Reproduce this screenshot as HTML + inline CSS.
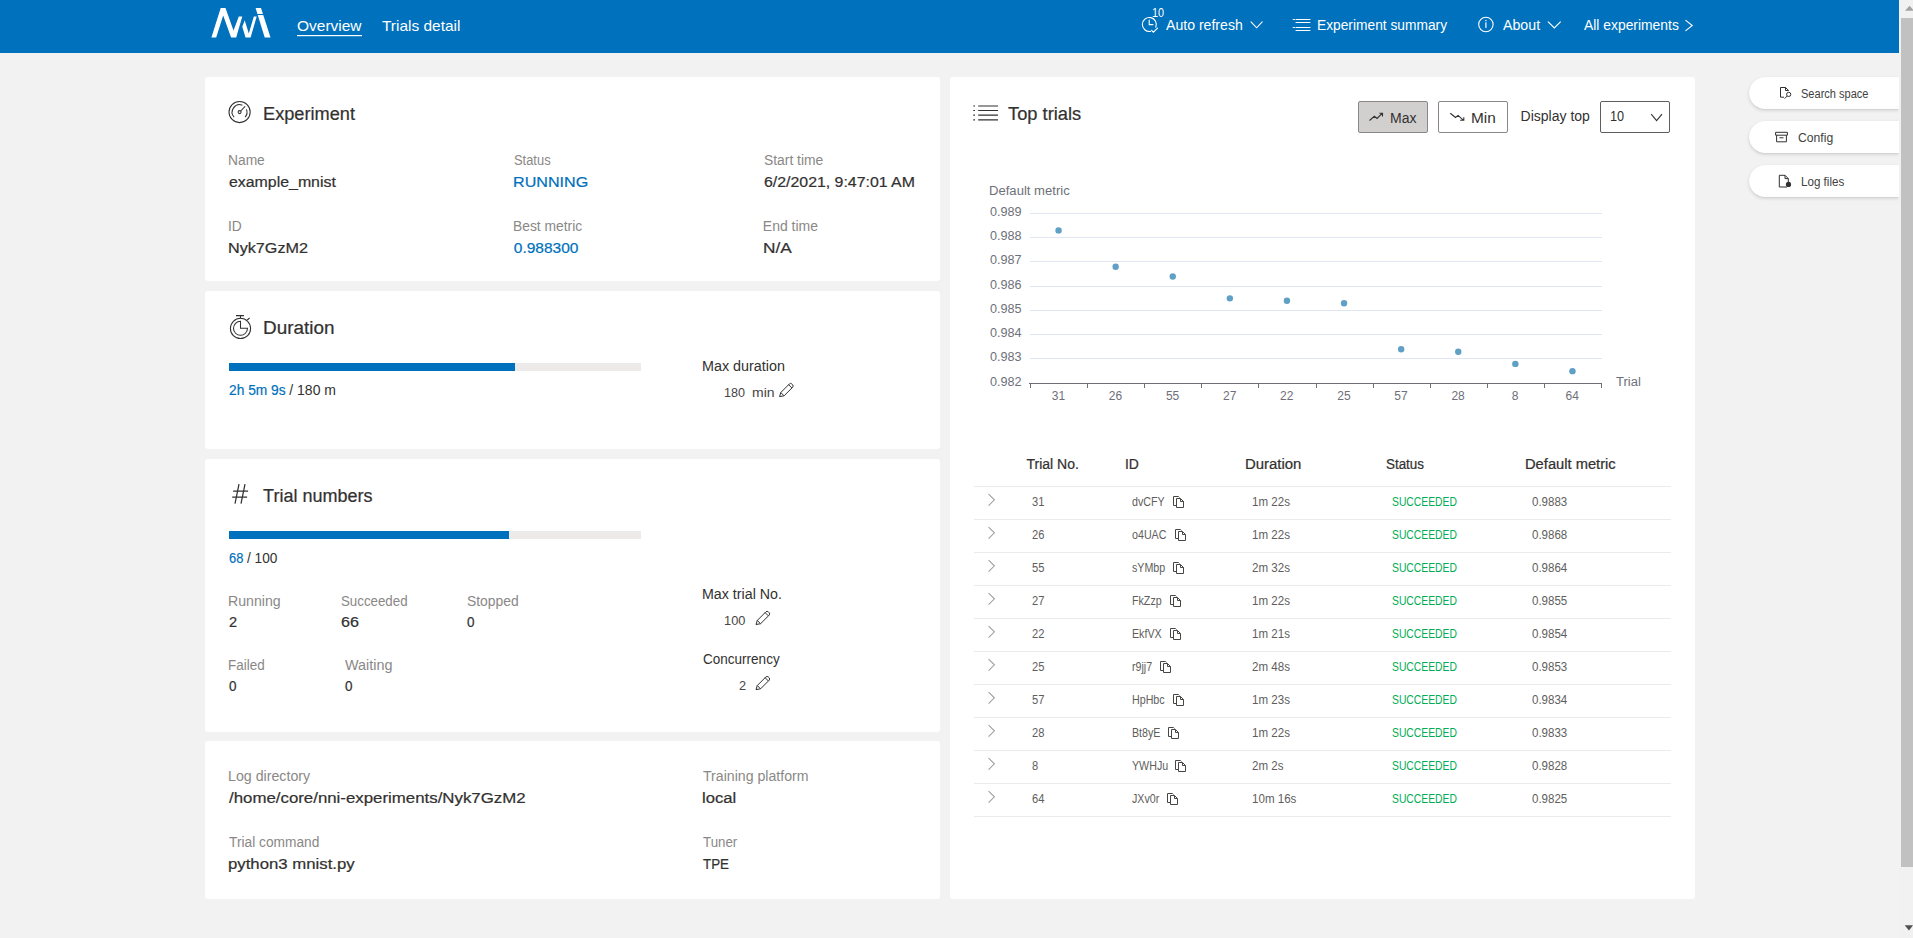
<!DOCTYPE html>
<html><head><meta charset="utf-8">
<style>
html,body{margin:0;padding:0;width:1913px;height:938px;overflow:hidden;background:#f2f2f2;font-family:"Liberation Sans",sans-serif;}
.t{position:absolute;white-space:nowrap;font-family:"Liberation Sans",sans-serif;}
.abs{position:absolute;}
.card{position:absolute;background:#fff;border-radius:3px;}
.sidebtn{position:absolute;left:1749px;width:150px;height:32px;background:#fff;border-radius:16px 0 0 16px;box-shadow:0 1.6px 3.6px rgba(0,0,0,0.13),0 0.3px 0.9px rgba(0,0,0,0.11);}
svg{position:absolute;left:0;top:0;overflow:visible;}
</style></head>
<body>
<div class="abs" style="left:0;top:0;width:1899px;height:53px;background:#0071bc;"></div>
<div class="card" style="left:205px;top:77px;width:735px;height:204px;"></div>
<div class="card" style="left:205px;top:291px;width:735px;height:158px;"></div>
<div class="card" style="left:205px;top:459px;width:735px;height:273px;"></div>
<div class="card" style="left:205px;top:741px;width:735px;height:158px;"></div>
<div class="card" style="left:950px;top:77px;width:745px;height:822px;"></div>
<div class="sidebtn" style="top:77px;"></div>
<div class="sidebtn" style="top:121px;"></div>
<div class="sidebtn" style="top:165px;"></div>
<!-- progress bars -->
<div class="abs" style="left:229px;top:363px;width:412px;height:8px;background:#edebe9;"></div>
<div class="abs" style="left:229px;top:363px;width:286px;height:8px;background:#0071bc;"></div>
<div class="abs" style="left:229px;top:531px;width:412px;height:8px;background:#edebe9;"></div>
<div class="abs" style="left:229px;top:531px;width:280px;height:8px;background:#0071bc;"></div>
<!-- buttons -->
<div class="abs" style="left:1358px;top:101px;width:68px;height:30px;background:#d2d0ce;border:1px solid #8a8886;border-radius:2px;"></div>
<div class="abs" style="left:1438px;top:101px;width:68px;height:30px;background:#fff;border:1px solid #8a8886;border-radius:2px;"></div>
<div class="abs" style="left:1600px;top:101px;width:68px;height:30px;background:#fff;border:1px solid #605e5c;border-radius:2px;"></div>
<!-- scrollbar -->
<div class="abs" style="left:1899px;top:0;width:14px;height:938px;background:#f1f1f1;"></div>
<div class="abs" style="left:1901px;top:18px;width:12px;height:849px;background:#c1c1c1;"></div>
<svg width="1913" height="938" viewBox="0 0 1913 938">
 <g fill="#a3a3a3"><path d="M1905,10.7 L1909.5,5.7 L1914,10.7 Z"/></g>
 <g fill="#505050"><path d="M1904.7,925.2 L1913,925.2 L1909,930.4 Z"/></g>
 <!-- logo -->
 <g fill="#fff" transform="translate(205,0)">
  <path d="M6.4,37.6 L15.7,8 L20.5,8 L28.5,30.6 L33.8,16.5 L37.3,16.5 L31.2,37.6 L26.1,37.6 L18.2,15.5 L11.2,37.6 Z"/>
  <path d="M37.3,26.7 L39.7,20.3 L43.8,33.6 L48.8,16.5 L51.7,16.5 L45.6,37.6 L40.5,37.6 Z"/>
  <path d="M50.6,8 L56,8 L65.5,37.6 L59.7,37.6 Z"/>
 </g>
 <path d="M51,14.5 L60,14.5" stroke="#0071bc" stroke-width="1.1" transform="translate(205,0)"/>
 <rect x="297" y="35" width="65" height="1.2" fill="#fff"/>
 <!-- header icons -->
 <g fill="none" stroke="#fff" stroke-width="1.1" stroke-linecap="round">
  <path d="M1155.8,27.2 A7,7 0 1 0 1150.5,31.4"/>
  <path d="M1149.2,20 V24.6 H1153"/>
  <path d="M1151.6,30.3 L1153.4,32.2 L1157.6,28.1"/>
  <path d="M1251,21.8 L1256.6,27.8 L1262.2,21.8"/>
  <path d="M1296,19.5 H1310 M1296,22.5 H1310 M1296,27.5 H1310 M1296,30.5 H1310"/>
  <path d="M1293.2,19.5 H1294.6 M1293.2,27.5 H1294.6"/>
  <circle cx="1485.9" cy="24.5" r="7.2"/>
  <path d="M1548.2,21.8 L1554.3,28 L1560.4,21.8"/>
  <path d="M1685.8,20.4 L1692.2,25.5 L1685.8,30.6"/>
 </g>
 <rect x="1485.3" y="22.3" width="1.2" height="5.6" fill="#fff"/>
 <rect x="1485.3" y="19.9" width="1.2" height="1.3" fill="#fff"/>
 <!-- card icons -->
 <g fill="none" stroke="#323130" stroke-width="1.05">
  <circle cx="239.6" cy="112" r="10.6"/>
  <path d="M234.10,117.05 A7.4,7.4 0 0 1 242.37,105.24"/>
  <path d="M246.46,109.33 A7.4,7.4 0 0 1 245.10,117.05"/>
  <circle cx="239.6" cy="112.1" r="1.5"/>
  <path d="M240.7,111 L245.1,106.3"/>
  <circle cx="240.5" cy="328.4" r="10.1"/>
  <path d="M240.5,321.3 A7,7 0 1 0 247.5,328.3 H240.5 Z"/>
  <path d="M236,315.6 H244 M240.5,315.6 V318.3 M247.2,320 L249.6,318"/>
 </g>
 <g fill="none" stroke="#323130" stroke-width="1.25">
  <path d="M239,484.2 L235,503.6 M245,484.2 L241,503.6 M233.1,491 H248.1 M232.2,497 H247.1"/>
 </g>
 <!-- pencils -->
 <g fill="none" stroke="#323130" stroke-width="1">
  <path d="M779.5,396.6 L780.8,392.5 L789.3,384 Q790.6,382.8 791.9,384 L792.6,384.7 Q793.8,386 792.6,387.3 L784.1,395.8 Z M780.8,392.5 L783.9,395.7 M788.6,384.7 L791.9,388"/>
  <path d="M756,624.5 L757.3,620.4 L765.8,611.9 Q767.1,610.7 768.4,611.9 L769.1,612.6 Q770.3,613.9 769.1,615.2 L760.6,623.7 Z M757.3,620.4 L760.4,623.6 M765.1,612.6 L768.4,615.9"/>
  <path d="M756,689.6 L757.3,685.5 L765.8,677 Q767.1,675.8 768.4,677 L769.1,677.7 Q770.3,679 769.1,680.3 L760.6,688.8 Z M757.3,685.5 L760.4,688.7 M765.1,677.7 L768.4,681"/>
 </g>
 <!-- top trials icons -->
 <g fill="none" stroke="#323130" stroke-width="1.1">
  <path d="M978.2,106 H998 M978.2,110.5 H998 M978.2,115.1 H998 M978.2,119.9 H998"/>
  <path d="M973.3,106 H975 M973.3,110.5 H975 M973.3,115.1 H975 M973.3,119.9 H975"/>
  <path d="M1369.5,120.5 L1374.4,116.3 L1377,118.4 L1382.2,113.3 M1379.4,113.3 H1382.5 V116.6"/>
  <path d="M1450.3,113.3 L1455.5,117.5 L1458.1,115.4 L1463.5,120.3 M1463.8,117.3 V120.3 H1460.2"/>
  <path d="M1651.2,114.2 L1656.6,120.6 L1662,114.2"/>
 </g>
 <!-- chart -->
 <rect x="1030" y="213" width="572" height="1" fill="#e0e6f1"/><rect x="1030" y="237" width="572" height="1" fill="#e0e6f1"/><rect x="1030" y="261" width="572" height="1" fill="#e0e6f1"/><rect x="1030" y="286" width="572" height="1" fill="#e0e6f1"/><rect x="1030" y="310" width="572" height="1" fill="#e0e6f1"/><rect x="1030" y="334" width="572" height="1" fill="#e0e6f1"/><rect x="1030" y="358" width="572" height="1" fill="#e0e6f1"/><rect x="1029" y="383" width="573" height="1" fill="#6e7079"/><rect x="1030" y="383" width="1" height="5" fill="#6e7079"/><rect x="1087" y="383" width="1" height="5" fill="#6e7079"/><rect x="1144" y="383" width="1" height="5" fill="#6e7079"/><rect x="1201" y="383" width="1" height="5" fill="#6e7079"/><rect x="1258" y="383" width="1" height="5" fill="#6e7079"/><rect x="1316" y="383" width="1" height="5" fill="#6e7079"/><rect x="1373" y="383" width="1" height="5" fill="#6e7079"/><rect x="1430" y="383" width="1" height="5" fill="#6e7079"/><rect x="1487" y="383" width="1" height="5" fill="#6e7079"/><rect x="1544" y="383" width="1" height="5" fill="#6e7079"/><rect x="1601" y="383" width="1" height="5" fill="#6e7079"/><circle cx="1058.55" cy="230.39" r="3.2" fill="#5fa0c4"/><circle cx="1115.65" cy="266.8" r="3.2" fill="#5fa0c4"/><circle cx="1172.75" cy="276.51" r="3.2" fill="#5fa0c4"/><circle cx="1229.85" cy="298.35" r="3.2" fill="#5fa0c4"/><circle cx="1286.95" cy="300.78" r="3.2" fill="#5fa0c4"/><circle cx="1344.05" cy="303.21" r="3.2" fill="#5fa0c4"/><circle cx="1401.15" cy="349.32" r="3.2" fill="#5fa0c4"/><circle cx="1458.25" cy="351.75" r="3.2" fill="#5fa0c4"/><circle cx="1515.35" cy="363.88" r="3.2" fill="#5fa0c4"/><circle cx="1572.45" cy="371.16" r="3.2" fill="#5fa0c4"/>
 <!-- table -->
 <rect x="974" y="486" width="697" height="1" fill="#edebe9"/><rect x="974" y="519" width="697" height="1" fill="#edebe9"/><rect x="974" y="552" width="697" height="1" fill="#edebe9"/><rect x="974" y="585" width="697" height="1" fill="#edebe9"/><rect x="974" y="618" width="697" height="1" fill="#edebe9"/><rect x="974" y="651" width="697" height="1" fill="#edebe9"/><rect x="974" y="684" width="697" height="1" fill="#edebe9"/><rect x="974" y="717" width="697" height="1" fill="#edebe9"/><rect x="974" y="750" width="697" height="1" fill="#edebe9"/><rect x="974" y="783" width="697" height="1" fill="#edebe9"/><rect x="974" y="816" width="697" height="1" fill="#edebe9"/>
 <g fill="none" stroke="#a19f9d" stroke-width="1.1"><path d="M988.6,494.1 L994.4,499.85 L988.6,505.6" /><path d="M988.6,527.1 L994.4,532.85 L988.6,538.6" /><path d="M988.6,560.1 L994.4,565.85 L988.6,571.6" /><path d="M988.6,593.1 L994.4,598.85 L988.6,604.6" /><path d="M988.6,626.1 L994.4,631.85 L988.6,637.6" /><path d="M988.6,659.1 L994.4,664.85 L988.6,670.6" /><path d="M988.6,692.1 L994.4,697.85 L988.6,703.6" /><path d="M988.6,725.1 L994.4,730.85 L988.6,736.6" /><path d="M988.6,758.1 L994.4,763.85 L988.6,769.6" /><path d="M988.6,791.1 L994.4,796.85 L988.6,802.6" /></g>
 <g fill="none" stroke="#484644" stroke-width="1"><g transform="translate(1173,496)"><path d="M0.5,9.5 H3 M0.5,9.5 V0.5 H5.5 L6.5,1.5" /><path d="M3.5,11.5 V2.5 H7.5 L10.5,5.5 V11.5 Z M7.5,2.5 V5.5 H10.5" /></g><g transform="translate(1175,529)"><path d="M0.5,9.5 H3 M0.5,9.5 V0.5 H5.5 L6.5,1.5" /><path d="M3.5,11.5 V2.5 H7.5 L10.5,5.5 V11.5 Z M7.5,2.5 V5.5 H10.5" /></g><g transform="translate(1173,562)"><path d="M0.5,9.5 H3 M0.5,9.5 V0.5 H5.5 L6.5,1.5" /><path d="M3.5,11.5 V2.5 H7.5 L10.5,5.5 V11.5 Z M7.5,2.5 V5.5 H10.5" /></g><g transform="translate(1170,595)"><path d="M0.5,9.5 H3 M0.5,9.5 V0.5 H5.5 L6.5,1.5" /><path d="M3.5,11.5 V2.5 H7.5 L10.5,5.5 V11.5 Z M7.5,2.5 V5.5 H10.5" /></g><g transform="translate(1170,628)"><path d="M0.5,9.5 H3 M0.5,9.5 V0.5 H5.5 L6.5,1.5" /><path d="M3.5,11.5 V2.5 H7.5 L10.5,5.5 V11.5 Z M7.5,2.5 V5.5 H10.5" /></g><g transform="translate(1160,661)"><path d="M0.5,9.5 H3 M0.5,9.5 V0.5 H5.5 L6.5,1.5" /><path d="M3.5,11.5 V2.5 H7.5 L10.5,5.5 V11.5 Z M7.5,2.5 V5.5 H10.5" /></g><g transform="translate(1173,694)"><path d="M0.5,9.5 H3 M0.5,9.5 V0.5 H5.5 L6.5,1.5" /><path d="M3.5,11.5 V2.5 H7.5 L10.5,5.5 V11.5 Z M7.5,2.5 V5.5 H10.5" /></g><g transform="translate(1168,727)"><path d="M0.5,9.5 H3 M0.5,9.5 V0.5 H5.5 L6.5,1.5" /><path d="M3.5,11.5 V2.5 H7.5 L10.5,5.5 V11.5 Z M7.5,2.5 V5.5 H10.5" /></g><g transform="translate(1175,760)"><path d="M0.5,9.5 H3 M0.5,9.5 V0.5 H5.5 L6.5,1.5" /><path d="M3.5,11.5 V2.5 H7.5 L10.5,5.5 V11.5 Z M7.5,2.5 V5.5 H10.5" /></g><g transform="translate(1167,793)"><path d="M0.5,9.5 H3 M0.5,9.5 V0.5 H5.5 L6.5,1.5" /><path d="M3.5,11.5 V2.5 H7.5 L10.5,5.5 V11.5 Z M7.5,2.5 V5.5 H10.5" /></g></g>
 <!-- side icons -->
 <g fill="none" stroke="#323130" stroke-width="1">
  <path d="M1784,97.2 H1780.5 V87.5 H1785.5 L1788.6,90.5 M1785.5,87.5 V90.5 H1788.6"/>
  <circle cx="1788.7" cy="94.4" r="2.1"/>
  <path d="M1787.2,96 L1784.6,98.6"/>
  <path d="M1775.6,132.3 H1787.4 V135.2 H1775.6 Z M1776.6,135.2 V141.8 H1786.4 V135.2 M1779.5,137.8 H1783.5"/>
  <path d="M1787,187 H1779.3 V175.3 H1785 L1788.3,178.6 V182 M1785,175.3 V178.6 H1788.3"/>
 </g>
 <circle cx="1788.5" cy="184.4" r="2.6" fill="#323130"/>
</svg>
<div class="t" style="left:297.3px;top:18px;font-size:15px;line-height:15px;color:#ffffff;transform:scaleX(1.032);transform-origin:0 0;">Overview</div>
<div class="t" style="left:382.2px;top:18px;font-size:15px;line-height:15px;color:#ffffff;transform:scaleX(1.030);transform-origin:0 0;">Trials detail</div>
<div class="t" style="left:1151.5px;top:7px;font-size:12px;line-height:12px;color:#ffffff;transform:scaleX(0.900);transform-origin:0 0;">10</div>
<div class="t" style="left:1166px;top:18px;font-size:14px;line-height:14px;color:#ffffff;transform:scaleX(1.007);transform-origin:0 0;">Auto refresh</div>
<div class="t" style="left:1317.02px;top:18px;font-size:14px;line-height:14px;color:#ffffff;transform:scaleX(0.983);transform-origin:0 0;">Experiment summary</div>
<div class="t" style="left:1502.5px;top:18px;font-size:14px;line-height:14px;color:#ffffff;transform:scaleX(1.014);transform-origin:0 0;">About</div>
<div class="t" style="left:1583.5px;top:18px;font-size:14px;line-height:14px;color:#ffffff;transform:scaleX(0.991);transform-origin:0 0;">All experiments</div>
<div class="t" style="left:262.99px;top:105px;font-size:18px;line-height:18px;color:#323130;-webkit-text-stroke:0.22px #323130;transform:scaleX(1.011);transform-origin:0 0;">Experiment</div>
<div class="t" style="left:228.12px;top:153px;font-size:14px;line-height:14px;color:#8a8886;transform:scaleX(0.985);transform-origin:0 0;">Name</div>
<div class="t" style="left:229.1px;top:173.75px;font-size:15.5px;line-height:15.5px;color:#323130;-webkit-text-stroke:0.22px #323130;transform:scaleX(1.025);transform-origin:0 0;">example_mnist</div>
<div class="t" style="left:513.8px;top:153px;font-size:14px;line-height:14px;color:#8a8886;transform:scaleX(0.922);transform-origin:0 0;">Status</div>
<div class="t" style="left:512.76px;top:173.75px;font-size:15.5px;line-height:15.5px;color:#0071bc;-webkit-text-stroke:0.22px #0071bc;transform:scaleX(1.039);transform-origin:0 0;">RUNNING</div>
<div class="t" style="left:763.8px;top:153px;font-size:14px;line-height:14px;color:#8a8886;transform:scaleX(0.990);transform-origin:0 0;">Start time</div>
<div class="t" style="left:763.8px;top:173.75px;font-size:15.5px;line-height:15.5px;color:#323130;-webkit-text-stroke:0.22px #323130;transform:scaleX(1.024);transform-origin:0 0;">6/2/2021, 9:47:01 AM</div>
<div class="t" style="left:228.11px;top:219px;font-size:14px;line-height:14px;color:#8a8886;transform:scaleX(0.985);transform-origin:0 0;">ID</div>
<div class="t" style="left:228.06px;top:239.75px;font-size:15.5px;line-height:15.5px;color:#323130;-webkit-text-stroke:0.22px #323130;transform:scaleX(1.044);transform-origin:0 0;">Nyk7GzM2</div>
<div class="t" style="left:512.81px;top:219px;font-size:14px;line-height:14px;color:#8a8886;transform:scaleX(0.988);transform-origin:0 0;">Best metric</div>
<div class="t" style="left:513.8px;top:239.75px;font-size:15.5px;line-height:15.5px;color:#0071bc;-webkit-text-stroke:0.22px #0071bc;">0.988300</div>
<div class="t" style="left:762.8px;top:219px;font-size:14px;line-height:14px;color:#8a8886;">End time</div>
<div class="t" style="left:762.69px;top:239.75px;font-size:15.5px;line-height:15.5px;color:#323130;-webkit-text-stroke:0.22px #323130;transform:scaleX(1.114);transform-origin:0 0;">N/A</div>
<div class="t" style="left:262.85px;top:319px;font-size:18px;line-height:18px;color:#323130;-webkit-text-stroke:0.22px #323130;transform:scaleX(1.051);transform-origin:0 0;">Duration</div>
<div class="t" style="left:702.18px;top:359px;font-size:14px;line-height:14px;color:#323130;transform:scaleX(1.025);transform-origin:0 0;">Max duration</div>
<div class="t" style="left:229px;top:383px;font-size:14px;line-height:14px;color:#0071bc;-webkit-text-stroke:0.2px #0071bc;transform:scaleX(0.983);transform-origin:0 0;">2h 5m 9s</div>
<div class="t" style="left:289.3px;top:383px;font-size:14px;line-height:14px;color:#323130;">/ 180 m</div>
<div class="t" style="left:724.46px;top:385.8px;font-size:13.4px;line-height:13.4px;color:#484644;transform:scaleX(0.938);transform-origin:0 0;">180</div>
<div class="t" style="left:752.2px;top:385.8px;font-size:13.4px;line-height:13.4px;color:#484644;transform:scaleX(1.046);transform-origin:0 0;">min</div>
<div class="t" style="left:263.1px;top:487px;font-size:18px;line-height:18px;color:#323130;-webkit-text-stroke:0.22px #323130;">Trial numbers</div>
<div class="t" style="left:229px;top:551px;font-size:14px;line-height:14px;color:#0071bc;-webkit-text-stroke:0.2px #0071bc;transform:scaleX(0.919);transform-origin:0 0;">68</div>
<div class="t" style="left:247.4px;top:551px;font-size:14px;line-height:14px;color:#323130;transform:scaleX(0.976);transform-origin:0 0;">/ 100</div>
<div class="t" style="left:228.09px;top:594px;font-size:14px;line-height:14px;color:#8a8886;transform:scaleX(1.009);transform-origin:0 0;">Running</div>
<div class="t" style="left:229.1px;top:613.75px;font-size:15.5px;line-height:15.5px;color:#323130;-webkit-text-stroke:0.22px #323130;transform:scaleX(0.938);transform-origin:0 0;">2</div>
<div class="t" style="left:340.7px;top:594px;font-size:14px;line-height:14px;color:#8a8886;transform:scaleX(0.950);transform-origin:0 0;">Succeeded</div>
<div class="t" style="left:340.7px;top:613.75px;font-size:15.5px;line-height:15.5px;color:#323130;-webkit-text-stroke:0.22px #323130;transform:scaleX(1.041);transform-origin:0 0;">66</div>
<div class="t" style="left:467.4px;top:594px;font-size:14px;line-height:14px;color:#8a8886;transform:scaleX(0.991);transform-origin:0 0;">Stopped</div>
<div class="t" style="left:467.4px;top:613.75px;font-size:15.5px;line-height:15.5px;color:#323130;-webkit-text-stroke:0.22px #323130;transform:scaleX(0.867);transform-origin:0 0;">0</div>
<div class="t" style="left:228.14px;top:658px;font-size:14px;line-height:14px;color:#8a8886;transform:scaleX(0.960);transform-origin:0 0;">Failed</div>
<div class="t" style="left:229.1px;top:677.75px;font-size:15.5px;line-height:15.5px;color:#323130;-webkit-text-stroke:0.22px #323130;transform:scaleX(0.867);transform-origin:0 0;">0</div>
<div class="t" style="left:344.6px;top:658px;font-size:14px;line-height:14px;color:#8a8886;transform:scaleX(1.027);transform-origin:0 0;">Waiting</div>
<div class="t" style="left:344.6px;top:677.75px;font-size:15.5px;line-height:15.5px;color:#323130;-webkit-text-stroke:0.22px #323130;transform:scaleX(0.867);transform-origin:0 0;">0</div>
<div class="t" style="left:702.18px;top:587px;font-size:14px;line-height:14px;color:#323130;transform:scaleX(1.017);transform-origin:0 0;">Max trial No.</div>
<div class="t" style="left:724.24px;top:613.8px;font-size:13.4px;line-height:13.4px;color:#484644;transform:scaleX(0.957);transform-origin:0 0;">100</div>
<div class="t" style="left:703.2px;top:652px;font-size:14px;line-height:14px;color:#323130;transform:scaleX(0.966);transform-origin:0 0;">Concurrency</div>
<div class="t" style="left:739.2px;top:678.8px;font-size:13.4px;line-height:13.4px;color:#484644;transform:scaleX(0.957);transform-origin:0 0;">2</div>
<div class="t" style="left:228.19px;top:769px;font-size:14px;line-height:14px;color:#8a8886;transform:scaleX(1.015);transform-origin:0 0;">Log directory</div>
<div class="t" style="left:229.2px;top:789.75px;font-size:15.5px;line-height:15.5px;color:#323130;-webkit-text-stroke:0.22px #323130;transform:scaleX(1.086);transform-origin:0 0;">/home/core/nni-experiments/Nyk7GzM2</div>
<div class="t" style="left:229.2px;top:835px;font-size:14px;line-height:14px;color:#8a8886;transform:scaleX(0.981);transform-origin:0 0;">Trial command</div>
<div class="t" style="left:228.12px;top:855.75px;font-size:15.5px;line-height:15.5px;color:#323130;-webkit-text-stroke:0.22px #323130;transform:scaleX(1.081);transform-origin:0 0;">python3 mnist.py</div>
<div class="t" style="left:702.8px;top:769px;font-size:14px;line-height:14px;color:#8a8886;transform:scaleX(1.009);transform-origin:0 0;">Training platform</div>
<div class="t" style="left:701.93px;top:789.75px;font-size:15.5px;line-height:15.5px;color:#323130;-webkit-text-stroke:0.22px #323130;transform:scaleX(1.074);transform-origin:0 0;">local</div>
<div class="t" style="left:703px;top:835px;font-size:14px;line-height:14px;color:#8a8886;transform:scaleX(0.951);transform-origin:0 0;">Tuner</div>
<div class="t" style="left:703px;top:855.75px;font-size:15.5px;line-height:15.5px;color:#323130;-webkit-text-stroke:0.22px #323130;transform:scaleX(0.862);transform-origin:0 0;">TPE</div>
<div class="t" style="left:1008.2px;top:105px;font-size:18px;line-height:18px;color:#323130;-webkit-text-stroke:0.22px #323130;transform:scaleX(1.016);transform-origin:0 0;">Top trials</div>
<div class="t" style="left:1390px;top:111px;font-size:14px;line-height:14px;color:#323130;">Max</div>
<div class="t" style="left:1471px;top:111px;font-size:14px;line-height:14px;color:#323130;transform:scaleX(1.098);transform-origin:0 0;">Min</div>
<div class="t" style="left:1520.6px;top:109px;font-size:14px;line-height:14px;color:#323130;">Display top</div>
<div class="t" style="left:1609.59px;top:109px;font-size:14px;line-height:14px;color:#323130;transform:scaleX(0.906);transform-origin:0 0;">10</div>
<div class="t" style="left:988.8px;top:185px;font-size:12px;line-height:12px;color:#6e7079;transform:scaleX(1.090);transform-origin:0 0;">Default metric</div>
<div class="t" style="left:989.73px;top:206px;font-size:12px;line-height:12px;color:#6e7079;transform:scaleX(1.050);transform-origin:0 0;">0.989</div>
<div class="t" style="left:989.73px;top:230px;font-size:12px;line-height:12px;color:#6e7079;transform:scaleX(1.050);transform-origin:0 0;">0.988</div>
<div class="t" style="left:989.73px;top:254px;font-size:12px;line-height:12px;color:#6e7079;transform:scaleX(1.050);transform-origin:0 0;">0.987</div>
<div class="t" style="left:989.73px;top:279px;font-size:12px;line-height:12px;color:#6e7079;transform:scaleX(1.050);transform-origin:0 0;">0.986</div>
<div class="t" style="left:989.73px;top:303px;font-size:12px;line-height:12px;color:#6e7079;transform:scaleX(1.050);transform-origin:0 0;">0.985</div>
<div class="t" style="left:989.73px;top:327px;font-size:12px;line-height:12px;color:#6e7079;transform:scaleX(1.050);transform-origin:0 0;">0.984</div>
<div class="t" style="left:989.73px;top:351px;font-size:12px;line-height:12px;color:#6e7079;transform:scaleX(1.050);transform-origin:0 0;">0.983</div>
<div class="t" style="left:989.73px;top:376px;font-size:12px;line-height:12px;color:#6e7079;transform:scaleX(1.050);transform-origin:0 0;">0.982</div>
<div class="t" style="left:1051.71px;top:390px;font-size:12px;line-height:12px;color:#6e7079;">31</div>
<div class="t" style="left:1108.81px;top:390px;font-size:12px;line-height:12px;color:#6e7079;">26</div>
<div class="t" style="left:1165.91px;top:390px;font-size:12px;line-height:12px;color:#6e7079;">55</div>
<div class="t" style="left:1223.01px;top:390px;font-size:12px;line-height:12px;color:#6e7079;">27</div>
<div class="t" style="left:1280.11px;top:390px;font-size:12px;line-height:12px;color:#6e7079;">22</div>
<div class="t" style="left:1337.21px;top:390px;font-size:12px;line-height:12px;color:#6e7079;">25</div>
<div class="t" style="left:1394.31px;top:390px;font-size:12px;line-height:12px;color:#6e7079;">57</div>
<div class="t" style="left:1451.41px;top:390px;font-size:12px;line-height:12px;color:#6e7079;">28</div>
<div class="t" style="left:1511.85px;top:390px;font-size:12px;line-height:12px;color:#6e7079;">8</div>
<div class="t" style="left:1565.61px;top:390px;font-size:12px;line-height:12px;color:#6e7079;">64</div>
<div class="t" style="left:1616.2px;top:376px;font-size:12px;line-height:12px;color:#6e7079;transform:scaleX(1.085);transform-origin:0 0;">Trial</div>
<div class="t" style="left:1026.5px;top:457px;font-size:14px;line-height:14px;color:#323130;-webkit-text-stroke:0.22px #323130;">Trial No.</div>
<div class="t" style="left:1125.01px;top:457px;font-size:14px;line-height:14px;color:#323130;-webkit-text-stroke:0.22px #323130;transform:scaleX(0.993);transform-origin:0 0;">ID</div>
<div class="t" style="left:1245.13px;top:457px;font-size:14px;line-height:14px;color:#323130;-webkit-text-stroke:0.22px #323130;transform:scaleX(1.066);transform-origin:0 0;">Duration</div>
<div class="t" style="left:1385.8px;top:457px;font-size:14px;line-height:14px;color:#323130;-webkit-text-stroke:0.22px #323130;transform:scaleX(0.957);transform-origin:0 0;">Status</div>
<div class="t" style="left:1525.05px;top:457px;font-size:14px;line-height:14px;color:#323130;-webkit-text-stroke:0.22px #323130;transform:scaleX(1.050);transform-origin:0 0;">Default metric</div>
<div class="t" style="left:1031.8px;top:496px;font-size:12px;line-height:12px;color:#605e5c;transform:scaleX(0.930);transform-origin:0 0;">31</div>
<div class="t" style="left:1131.6px;top:496px;font-size:12px;line-height:12px;color:#605e5c;transform:scaleX(0.890);transform-origin:0 0;">dvCFY</div>
<div class="t" style="left:1252.4px;top:496px;font-size:12px;line-height:12px;color:#605e5c;transform:scaleX(0.965);transform-origin:0 0;">1m 22s</div>
<div class="t" style="left:1391.5px;top:495.85px;font-size:12.3px;line-height:12.3px;color:#00ad56;transform:scaleX(0.840);transform-origin:0 0;">SUCCEEDED</div>
<div class="t" style="left:1531.5px;top:496px;font-size:12px;line-height:12px;color:#605e5c;transform:scaleX(0.960);transform-origin:0 0;">0.9883</div>
<div class="t" style="left:1031.8px;top:529px;font-size:12px;line-height:12px;color:#605e5c;transform:scaleX(0.930);transform-origin:0 0;">26</div>
<div class="t" style="left:1131.6px;top:529px;font-size:12px;line-height:12px;color:#605e5c;transform:scaleX(0.890);transform-origin:0 0;">o4UAC</div>
<div class="t" style="left:1252.4px;top:529px;font-size:12px;line-height:12px;color:#605e5c;transform:scaleX(0.965);transform-origin:0 0;">1m 22s</div>
<div class="t" style="left:1391.5px;top:528.85px;font-size:12.3px;line-height:12.3px;color:#00ad56;transform:scaleX(0.840);transform-origin:0 0;">SUCCEEDED</div>
<div class="t" style="left:1531.5px;top:529px;font-size:12px;line-height:12px;color:#605e5c;transform:scaleX(0.960);transform-origin:0 0;">0.9868</div>
<div class="t" style="left:1031.8px;top:562px;font-size:12px;line-height:12px;color:#605e5c;transform:scaleX(0.930);transform-origin:0 0;">55</div>
<div class="t" style="left:1131.6px;top:562px;font-size:12px;line-height:12px;color:#605e5c;transform:scaleX(0.890);transform-origin:0 0;">sYMbp</div>
<div class="t" style="left:1252.4px;top:562px;font-size:12px;line-height:12px;color:#605e5c;transform:scaleX(0.965);transform-origin:0 0;">2m 32s</div>
<div class="t" style="left:1391.5px;top:561.85px;font-size:12.3px;line-height:12.3px;color:#00ad56;transform:scaleX(0.840);transform-origin:0 0;">SUCCEEDED</div>
<div class="t" style="left:1531.5px;top:562px;font-size:12px;line-height:12px;color:#605e5c;transform:scaleX(0.960);transform-origin:0 0;">0.9864</div>
<div class="t" style="left:1031.8px;top:595px;font-size:12px;line-height:12px;color:#605e5c;transform:scaleX(0.930);transform-origin:0 0;">27</div>
<div class="t" style="left:1131.6px;top:595px;font-size:12px;line-height:12px;color:#605e5c;transform:scaleX(0.890);transform-origin:0 0;">FkZzp</div>
<div class="t" style="left:1252.4px;top:595px;font-size:12px;line-height:12px;color:#605e5c;transform:scaleX(0.965);transform-origin:0 0;">1m 22s</div>
<div class="t" style="left:1391.5px;top:594.85px;font-size:12.3px;line-height:12.3px;color:#00ad56;transform:scaleX(0.840);transform-origin:0 0;">SUCCEEDED</div>
<div class="t" style="left:1531.5px;top:595px;font-size:12px;line-height:12px;color:#605e5c;transform:scaleX(0.960);transform-origin:0 0;">0.9855</div>
<div class="t" style="left:1031.8px;top:628px;font-size:12px;line-height:12px;color:#605e5c;transform:scaleX(0.930);transform-origin:0 0;">22</div>
<div class="t" style="left:1131.6px;top:628px;font-size:12px;line-height:12px;color:#605e5c;transform:scaleX(0.890);transform-origin:0 0;">EkfVX</div>
<div class="t" style="left:1252.4px;top:628px;font-size:12px;line-height:12px;color:#605e5c;transform:scaleX(0.965);transform-origin:0 0;">1m 21s</div>
<div class="t" style="left:1391.5px;top:627.85px;font-size:12.3px;line-height:12.3px;color:#00ad56;transform:scaleX(0.840);transform-origin:0 0;">SUCCEEDED</div>
<div class="t" style="left:1531.5px;top:628px;font-size:12px;line-height:12px;color:#605e5c;transform:scaleX(0.960);transform-origin:0 0;">0.9854</div>
<div class="t" style="left:1031.8px;top:661px;font-size:12px;line-height:12px;color:#605e5c;transform:scaleX(0.930);transform-origin:0 0;">25</div>
<div class="t" style="left:1131.6px;top:661px;font-size:12px;line-height:12px;color:#605e5c;transform:scaleX(0.890);transform-origin:0 0;">r9jj7</div>
<div class="t" style="left:1252.4px;top:661px;font-size:12px;line-height:12px;color:#605e5c;transform:scaleX(0.965);transform-origin:0 0;">2m 48s</div>
<div class="t" style="left:1391.5px;top:660.85px;font-size:12.3px;line-height:12.3px;color:#00ad56;transform:scaleX(0.840);transform-origin:0 0;">SUCCEEDED</div>
<div class="t" style="left:1531.5px;top:661px;font-size:12px;line-height:12px;color:#605e5c;transform:scaleX(0.960);transform-origin:0 0;">0.9853</div>
<div class="t" style="left:1031.8px;top:694px;font-size:12px;line-height:12px;color:#605e5c;transform:scaleX(0.930);transform-origin:0 0;">57</div>
<div class="t" style="left:1131.6px;top:694px;font-size:12px;line-height:12px;color:#605e5c;transform:scaleX(0.890);transform-origin:0 0;">HpHbc</div>
<div class="t" style="left:1252.4px;top:694px;font-size:12px;line-height:12px;color:#605e5c;transform:scaleX(0.965);transform-origin:0 0;">1m 23s</div>
<div class="t" style="left:1391.5px;top:693.85px;font-size:12.3px;line-height:12.3px;color:#00ad56;transform:scaleX(0.840);transform-origin:0 0;">SUCCEEDED</div>
<div class="t" style="left:1531.5px;top:694px;font-size:12px;line-height:12px;color:#605e5c;transform:scaleX(0.960);transform-origin:0 0;">0.9834</div>
<div class="t" style="left:1031.8px;top:727px;font-size:12px;line-height:12px;color:#605e5c;transform:scaleX(0.930);transform-origin:0 0;">28</div>
<div class="t" style="left:1131.6px;top:727px;font-size:12px;line-height:12px;color:#605e5c;transform:scaleX(0.890);transform-origin:0 0;">Bt8yE</div>
<div class="t" style="left:1252.4px;top:727px;font-size:12px;line-height:12px;color:#605e5c;transform:scaleX(0.965);transform-origin:0 0;">1m 22s</div>
<div class="t" style="left:1391.5px;top:726.85px;font-size:12.3px;line-height:12.3px;color:#00ad56;transform:scaleX(0.840);transform-origin:0 0;">SUCCEEDED</div>
<div class="t" style="left:1531.5px;top:727px;font-size:12px;line-height:12px;color:#605e5c;transform:scaleX(0.960);transform-origin:0 0;">0.9833</div>
<div class="t" style="left:1031.8px;top:760px;font-size:12px;line-height:12px;color:#605e5c;transform:scaleX(0.930);transform-origin:0 0;">8</div>
<div class="t" style="left:1131.6px;top:760px;font-size:12px;line-height:12px;color:#605e5c;transform:scaleX(0.890);transform-origin:0 0;">YWHJu</div>
<div class="t" style="left:1252.4px;top:760px;font-size:12px;line-height:12px;color:#605e5c;transform:scaleX(0.965);transform-origin:0 0;">2m 2s</div>
<div class="t" style="left:1391.5px;top:759.85px;font-size:12.3px;line-height:12.3px;color:#00ad56;transform:scaleX(0.840);transform-origin:0 0;">SUCCEEDED</div>
<div class="t" style="left:1531.5px;top:760px;font-size:12px;line-height:12px;color:#605e5c;transform:scaleX(0.960);transform-origin:0 0;">0.9828</div>
<div class="t" style="left:1031.8px;top:793px;font-size:12px;line-height:12px;color:#605e5c;transform:scaleX(0.930);transform-origin:0 0;">64</div>
<div class="t" style="left:1131.6px;top:793px;font-size:12px;line-height:12px;color:#605e5c;transform:scaleX(0.890);transform-origin:0 0;">JXv0r</div>
<div class="t" style="left:1252.4px;top:793px;font-size:12px;line-height:12px;color:#605e5c;transform:scaleX(0.965);transform-origin:0 0;">10m 16s</div>
<div class="t" style="left:1391.5px;top:792.85px;font-size:12.3px;line-height:12.3px;color:#00ad56;transform:scaleX(0.840);transform-origin:0 0;">SUCCEEDED</div>
<div class="t" style="left:1531.5px;top:793px;font-size:12px;line-height:12px;color:#605e5c;transform:scaleX(0.960);transform-origin:0 0;">0.9825</div>
<div class="t" style="left:1801.2px;top:88px;font-size:12px;line-height:12px;color:#403f3e;transform:scaleX(0.920);transform-origin:0 0;">Search space</div>
<div class="t" style="left:1797.7px;top:132px;font-size:12px;line-height:12px;color:#403f3e;transform:scaleX(1.014);transform-origin:0 0;">Config</div>
<div class="t" style="left:1801px;top:176px;font-size:12px;line-height:12px;color:#403f3e;transform:scaleX(0.967);transform-origin:0 0;">Log files</div>
</body></html>
